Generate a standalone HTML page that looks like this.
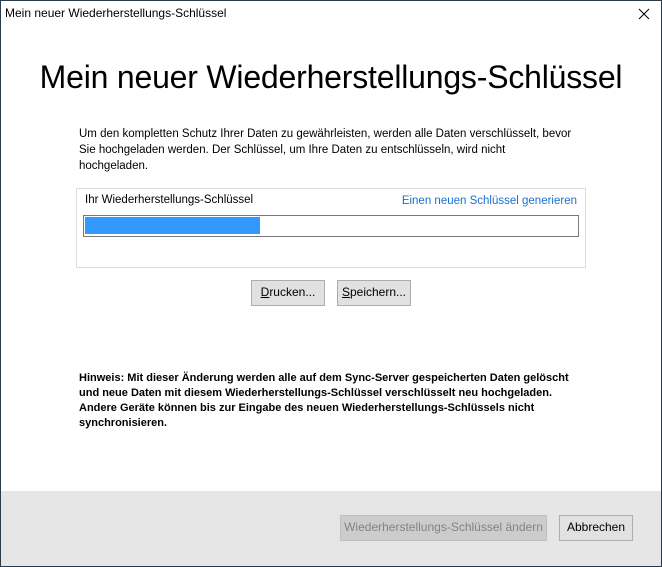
<!DOCTYPE html>
<html><head><meta charset="utf-8"><style>
*{margin:0;padding:0;box-sizing:border-box}
body{width:662px;height:567px;position:relative;background:#fff;font-family:"Liberation Sans",sans-serif;font-size:12px;color:#000;overflow:hidden}
.b{position:absolute}
.frame{position:absolute;left:0;top:0;width:662px;height:567px;border:1px solid #2b3a4c;pointer-events:none}
.btn{position:absolute;background:#e1e1e1;border:1px solid #adadad;text-align:center;line-height:23px;font-size:12px}
</style></head><body>
<div class="b" style="left:5px;top:6px;font-size:12px">Mein neuer Wiederherstellungs-Schlüssel</div>
<svg class="b" style="left:638px;top:8px" width="12" height="12" viewBox="0 0 12 12"><path d="M1 1L11 11M11 1L1 11" stroke="#000" stroke-width="1"/></svg>
<div class="b" style="left:0;width:662px;top:59px;text-align:center;font-size:32px;letter-spacing:-0.2px">Mein neuer Wiederherstellungs-Schlüssel</div>
<div class="b" style="left:79px;top:126px;width:530px;line-height:16px;font-size:11.5px">Um den kompletten Schutz Ihrer Daten zu gewährleisten, werden alle Daten verschlüsselt, bevor<br>Sie hochgeladen werden. Der Schlüssel, um Ihre Daten zu entschlüsseln, wird nicht<br>hochgeladen.</div>
<div class="b" style="left:76px;top:188px;width:510px;height:80px;border:1px solid #dcdcdc"></div>
<div class="b" style="left:85px;top:194px;font-size:11.5px">Ihr Wiederherstellungs-Schlüssel</div>
<div class="b" style="right:85px;top:195px;font-size:11.5px;color:#1a6fcf">Einen neuen Schlüssel generieren</div>
<div class="b" style="left:83px;top:215px;width:496px;height:22px;border:1px solid #7a7a7a;background:#fff"><div style="position:absolute;left:1px;top:1px;width:175px;height:17px;background:#3399ff"></div></div>
<div class="btn" style="left:251px;top:280px;width:74px;height:26px"><u>D</u>rucken...</div>
<div class="btn" style="left:337px;top:280px;width:74px;height:26px"><u>S</u>peichern...</div>
<div class="b" style="left:79px;top:371px;width:502px;font-weight:bold;font-size:11px;line-height:15px">Hinweis: Mit dieser Änderung werden alle auf dem Sync-Server gespeicherten Daten gelöscht und neue Daten mit diesem Wiederherstellungs-Schlüssel verschlüsselt neu hochgeladen.<br>Andere Geräte können bis zur Eingabe des neuen Wiederherstellungs-Schlüssels nicht synchronisieren.</div>
<div class="b" style="left:0;top:491px;width:662px;height:76px;background:#e6e6e6"></div>
<div class="btn" style="left:340px;top:515px;width:207px;height:26px;background:#cccccc;border-color:#bfbfbf;color:#838383">Wiederherstellungs-Schlüssel ändern</div>
<div class="btn" style="left:559px;top:515px;width:74px;height:26px;background:#e1e1e1">Abbrechen</div>
<div class="frame"></div>
</body></html>
